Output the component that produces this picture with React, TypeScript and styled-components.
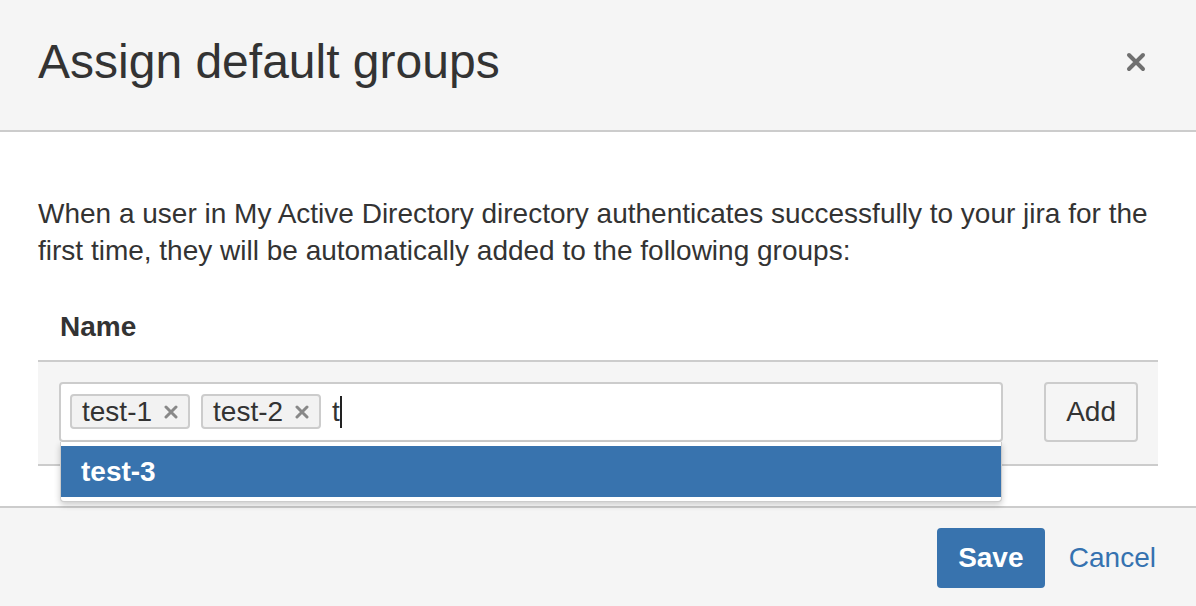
import React from 'react';
import styled, { createGlobalStyle } from 'styled-components';

const GlobalStyle = createGlobalStyle`
  html, body {
    margin: 0;
    padding: 0;
    background: #fff;
  }
  body {
    font-family: 'Liberation Sans', Arial, sans-serif;
    color: #333;
  }
`;

const Dialog = styled.div`
  width: 1196px;
  height: 606px;
  display: flex;
  flex-direction: column;
  overflow: hidden;
  box-sizing: border-box;
`;

const Header = styled.header`
  height: 132px;
  box-sizing: border-box;
  background: #f5f5f5;
  border-bottom: 2px solid #ccc;
  display: flex;
  align-items: center;
  justify-content: space-between;
  padding: 0 40px 6px 38px;
  flex-shrink: 0;
`;

const Title = styled.h2`
  margin: 0;
  font-size: 48px;
  line-height: 60px;
  font-weight: 400;
  color: #333;
`;

const CloseButton = styled.button`
  width: 40px;
  height: 40px;
  padding: 0;
  border: none;
  background: none;
  display: flex;
  align-items: center;
  justify-content: center;
  cursor: pointer;
`;

const Content = styled.main`
  flex: 1;
  padding: 63px 38px 0;
  background: #fff;
`;

const Intro = styled.p`
  margin: 0;
  font-size: 28px;
  line-height: 37px;
  color: #333;
`;

const Table = styled.div`
  margin-top: 19px;
  display: grid;
  grid-template-columns: 1fr auto;
`;

const HeadCell = styled.div`
  grid-column: 1 / -1;
  padding: 20px 22px 15px;
  font-size: 28px;
  line-height: 37px;
  font-weight: 700;
  border-bottom: 2px solid #ccc;
`;

const Cell = styled.div<{ $first?: boolean }>`
  background: #f5f5f5;
  border-bottom: 2px solid #ccc;
  padding: ${(p) => (p.$first ? '20px 21px 22px 21px' : '20px 20px 22px 20px')};
`;

const Picker = styled.div`
  position: relative;
  height: 60px;
  box-sizing: border-box;
  border: 2px solid #ccc;
  border-radius: 4px;
  background: #fff;
  display: flex;
  align-items: center;
  padding: 0 9px 1px;
  gap: 11px;
`;

const Tag = styled.span`
  display: inline-flex;
  align-items: center;
  height: 35px;
  box-sizing: border-box;
  border: 2px solid #ccc;
  border-radius: 4px;
  background: #f2f2f2;
  padding: 0 10px 0 10px;
  font-size: 28px;
  color: #333;
  gap: 12px;
`;

const Typed = styled.span`
  font-size: 28px;
  color: #333;
  display: inline-flex;
  align-items: center;
`;

const Caret = styled.span`
  display: inline-block;
  width: 2px;
  height: 32px;
  background: #222;
`;

const Menu = styled.ul`
  position: absolute;
  top: calc(100% + 2px);
  left: -1px;
  right: -1px;
  margin: 0;
  padding: 4px 0;
  list-style: none;
  background: #fff;
  border: 1px solid #ccc;
  border-top: none;
  border-radius: 0 0 4px 4px;
  box-shadow: 0 3px 6px rgba(0, 0, 0, 0.2);
  z-index: 2;
`;

const MenuItem = styled.li<{ $active?: boolean }>`
  height: 51px;
  display: flex;
  align-items: center;
  padding: 0 20px;
  font-size: 28px;
  font-weight: 700;
  background: ${(p) => (p.$active ? '#3873ae' : '#fff')};
  color: ${(p) => (p.$active ? '#fff' : '#333')};
`;

const Button = styled.button<{ $primary?: boolean }>`
  height: 60px;
  box-sizing: border-box;
  padding: 0 ${(p) => (p.$primary ? '0' : '20px')};
  width: ${(p) => (p.$primary ? '108px' : 'auto')};
  border-radius: 4px;
  font-family: 'Liberation Sans', Arial, sans-serif;
  font-size: 28px;
  cursor: pointer;
  border: 2px solid ${(p) => (p.$primary ? '#3873ae' : '#ccc')};
  background: ${(p) => (p.$primary ? '#3873ae' : '#f5f5f5')};
  color: ${(p) => (p.$primary ? '#fff' : '#333')};
  font-weight: ${(p) => (p.$primary ? 700 : 400)};
`;

const Footer = styled.footer`
  height: 100px;
  box-sizing: border-box;
  flex-shrink: 0;
  background: #f5f5f5;
  border-top: 2px solid #ccc;
  display: flex;
  align-items: flex-start;
  justify-content: flex-end;
  gap: 24px;
  padding: 20px 40px 0;
`;

const CancelLink = styled.a`
  font-size: 28px;
  line-height: 60px;
  color: #3572b0;
  text-decoration: none;
  cursor: pointer;
`;

const RemoveIcon = () => (
  <svg width="14" height="14" viewBox="0 0 14 14">
    <path d="M2 2 L12 12 M12 2 L2 12" stroke="#888" strokeWidth="3" strokeLinecap="round" />
  </svg>
);

const CloseIcon = () => (
  <svg width="20" height="20" viewBox="0 0 20 20">
    <path d="M3 3 L17 17 M17 3 L3 17" stroke="#707070" strokeWidth="4" strokeLinecap="round" />
  </svg>
);

const App = () => {
  const groups = ['test-1', 'test-2'];

  return (
    <>
      <GlobalStyle />
      <Dialog>
        <Header>
          <Title>Assign default groups</Title>
          <CloseButton aria-label="Close">
            <CloseIcon />
          </CloseButton>
        </Header>
        <Content>
          <Intro>
            When a user in My Active Directory directory authenticates successfully to your jira for the
            first time, they will be automatically added to the following groups:
          </Intro>
          <Table>
            <HeadCell>Name</HeadCell>
            <Cell $first>
              <Picker>
                {groups.map((g) => (
                  <Tag key={g}>
                    {g}
                    <RemoveIcon />
                  </Tag>
                ))}
                <Typed>
                  t<Caret />
                </Typed>
                <Menu>
                  <MenuItem $active>test-3</MenuItem>
                </Menu>
              </Picker>
            </Cell>
            <Cell>
              <Button>Add</Button>
            </Cell>
          </Table>
        </Content>
        <Footer>
          <Button $primary>Save</Button>
          <CancelLink>Cancel</CancelLink>
        </Footer>
      </Dialog>
    </>
  );
};

export default App;
